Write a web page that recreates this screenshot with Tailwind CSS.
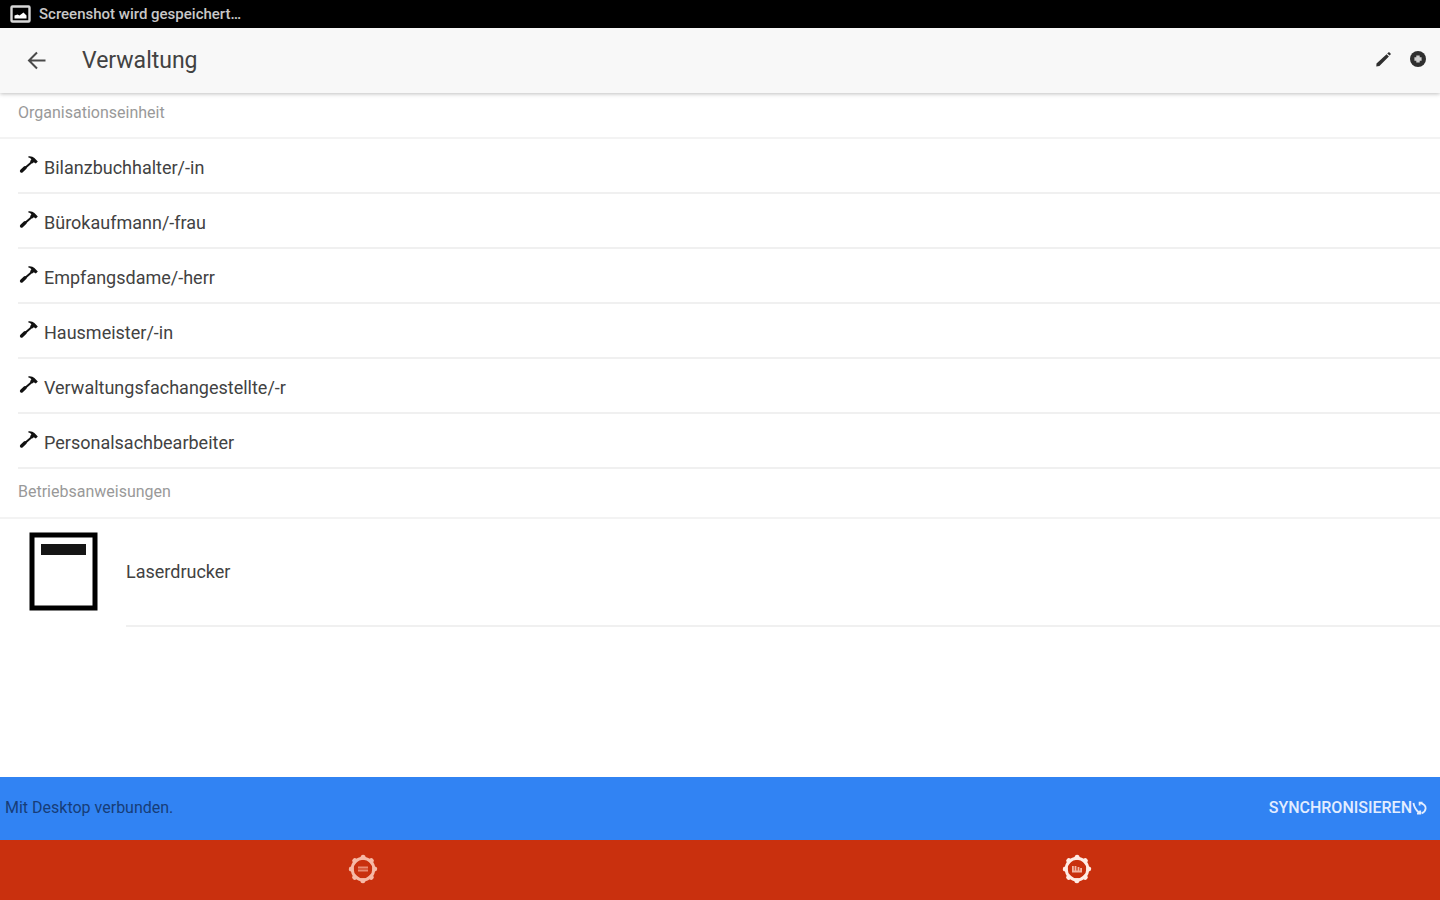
<!DOCTYPE html>
<html lang="de">
<head>
    <meta charset="UTF-8">
    <meta name="viewport" content="width=device-width, initial-scale=1.0">
    <title>Verwaltung</title>
    <script src="https://cdn.jsdelivr.net/npm/@tailwindcss/browser@4"></script>
</head>
<body class="flex min-h-screen flex-col bg-white font-['Roboto',sans-serif] text-[#424242]">
    <!-- shared icons -->
    <svg class="hidden" aria-hidden="true">
        <symbol id="hammer" viewBox="0 0 20 20">
            <path d="M3.6 17 15 7" stroke="currentColor" stroke-width="2" stroke-linecap="round" />
            <path d="M3.6 17 7 13.8" stroke="currentColor" stroke-width="3.4" stroke-linecap="round" />
            <path d="M10.4 2.2 Q14.4 1.8 16.4 4 L19.8 7.6 17.8 9.4 15.8 8.2 14.2 9.4 12 7.2 13.4 5.6 Q12.4 3.8 10.4 3.6Z" fill="currentColor" />
        </symbol>
        <symbol id="gear" viewBox="0 0 30 30">
            <g fill="none" stroke="currentColor">
                <circle cx="15" cy="15" r="10.8" stroke-width="3" />
                <circle cx="15" cy="15" r="11.7" stroke-width="5" stroke-linecap="round" pathLength="80" stroke-dasharray="0.1 9.9" transform="rotate(-90 15 15)" />
            </g>
        </symbol>
    </svg>

    <div class="flex h-7 items-center gap-2 bg-black px-2.5 text-[15px] font-medium text-[#c8c8c8]">
        <svg class="h-5 w-[21px]" viewBox="0 0 21 20" fill="none">
            <rect x="1.5" y="2.5" width="18" height="15" rx="1" stroke="#d8d8d8" stroke-width="2.4" />
            <path d="M4.5 14.5v-3l3-1 2 1 4-3 3 3v3Z" fill="#fff" />
        </svg>
        <span>Screenshot wird gespeichert…</span>
    </div>

    <header class="relative flex h-[65px] items-center bg-[#f8f8f8] px-[27px] shadow-[0_1px_4px_rgba(0,0,0,0.25)]">
        <button type="button" class="mr-9" aria-label="Zurück">
            <svg class="h-[19px] w-[19px]" viewBox="0 0 19 19" fill="none" stroke="#4a4a4a" stroke-width="2">
                <path d="M18.5 9.5H2M10 1.5l-8 8 8 8" />
            </svg>
        </button>
        <h1 class="flex-1 pt-0.5 text-[23px]">Verwaltung</h1>
        <div class="-mr-3.5 mb-1 flex items-center gap-4">
            <button type="button" aria-label="Bearbeiten">
                <svg class="h-[18px] w-[18px]" viewBox="0 0 18 18" fill="#2f2f2f">
                    <path d="M1.5 13.6 11.6 4.2l2.3 2.3L4.4 16l-3.1.5Z M12.2 3.4l1.8-1.5 2 2.2-1.4 1.5Z" />
                </svg>
            </button>
            <button type="button" aria-label="Hinzufügen">
                <svg class="h-[18px] w-[18px]" viewBox="0 0 18 18">
                    <circle cx="9" cy="9" r="8" fill="#2f2f2f" />
                    <path d="M9 5.4v7.2M5.4 9h7.2" stroke="#cfcfcf" stroke-width="3.4" />
                </svg>
            </button>
        </div>
    </header>

    <main class="flex-1 text-lg">
        <section>
            <h2 class="flex h-[46px] items-center border-b-2 border-[#f3f3f3] px-[18px] pb-1 text-base text-[#999]">Organisationseinheit</h2>
            <ul class="pl-[18px]">
                <li class="flex h-[55px] items-center gap-1.5 border-b-2 border-[#f0f0f0]">
                    <svg class="mb-1 h-5 w-5 text-[#111]" fill="none"><use href="#hammer" /></svg>
                    <span class="pt-1">Bilanzbuchhalter/-in</span>
                </li>
                <li class="flex h-[55px] items-center gap-1.5 border-b-2 border-[#f0f0f0]">
                    <svg class="mb-1 h-5 w-5 text-[#111]" fill="none"><use href="#hammer" /></svg>
                    <span class="pt-1">Bürokaufmann/-frau</span>
                </li>
                <li class="flex h-[55px] items-center gap-1.5 border-b-2 border-[#f0f0f0]">
                    <svg class="mb-1 h-5 w-5 text-[#111]" fill="none"><use href="#hammer" /></svg>
                    <span class="pt-1">Empfangsdame/-herr</span>
                </li>
                <li class="flex h-[55px] items-center gap-1.5 border-b-2 border-[#f0f0f0]">
                    <svg class="mb-1 h-5 w-5 text-[#111]" fill="none"><use href="#hammer" /></svg>
                    <span class="pt-1">Hausmeister/-in</span>
                </li>
                <li class="flex h-[55px] items-center gap-1.5 border-b-2 border-[#f0f0f0]">
                    <svg class="mb-1 h-5 w-5 text-[#111]" fill="none"><use href="#hammer" /></svg>
                    <span class="pt-1">Verwaltungsfachangestellte/-r</span>
                </li>
                <li class="flex h-[55px] items-center gap-1.5 border-b-2 border-[#f0f0f0]">
                    <svg class="mb-1 h-5 w-5 text-[#111]" fill="none"><use href="#hammer" /></svg>
                    <span class="pt-1">Personalsachbearbeiter</span>
                </li>
            </ul>
        </section>

        <section>
            <h2 class="flex h-[50px] items-center border-b-2 border-[#f3f3f3] px-[18px] pb-0.5 text-base text-[#999]">Betriebsanweisungen</h2>
            <ul>
                <li class="flex h-[108px] gap-7 pl-[29px]">
                    <svg class="mt-3 h-20 w-[69px]" viewBox="0 0 69 80" fill="none">
                        <rect x="3" y="4" width="63" height="73" stroke="#000" stroke-width="5" />
                        <rect x="12" y="13" width="45" height="11" fill="#151515" />
                    </svg>
                    <div class="flex flex-1 items-center border-b-2 border-[#f0f0f0]">Laserdrucker</div>
                </li>
            </ul>
        </section>
    </main>

    <footer>
        <div class="flex h-[63px] items-center justify-between bg-[#3183f3] pr-3 pb-0.5 pl-[5px] text-base">
            <span class="text-[#173d78]">Mit Desktop verbunden.</span>
            <button type="button" class="flex items-center font-medium text-[#e2edff]">
                SYNCHRONISIEREN
                <svg class="h-4 w-4" viewBox="0 0 16 16" fill="none" stroke="currentColor" stroke-width="1.8">
                    <path d="M1.4 3 Q2.6 9.5 7.6 13M5 13.6h3.2v-3.2M8.4 2.8Q14 4.6 13.6 8.6 13.2 12 9.6 13.4M7.6 5.4V2.6h3" />
                </svg>
            </button>
        </div>
        <nav class="flex h-[60px] bg-[#c9300e] px-1.5">
            <a href="#" class="flex flex-1 items-center justify-center pb-0.5 text-[#f6b9a6]" aria-label="Organisation">
                <svg class="h-[30px] w-[30px]" viewBox="0 0 30 30">
                    <use href="#gear" />
                    <path d="M10 13.5h10M10 16.5h10" stroke="#e98a72" stroke-width="2" />
                </svg>
            </a>
            <a href="#" class="flex flex-1 items-center justify-center pb-0.5 text-[#ffece5]" aria-label="Betriebsanweisungen">
                <svg class="h-[30px] w-[30px]" viewBox="0 0 30 30">
                    <use href="#gear" />
                    <path d="M10.9 12v6M13.5 12v6M16.5 13v5M19.1 14v4M10 17.5h10" stroke="#f3b5a3" stroke-width="1.8" />
                </svg>
            </a>
        </nav>
    </footer>
</body>
</html>
